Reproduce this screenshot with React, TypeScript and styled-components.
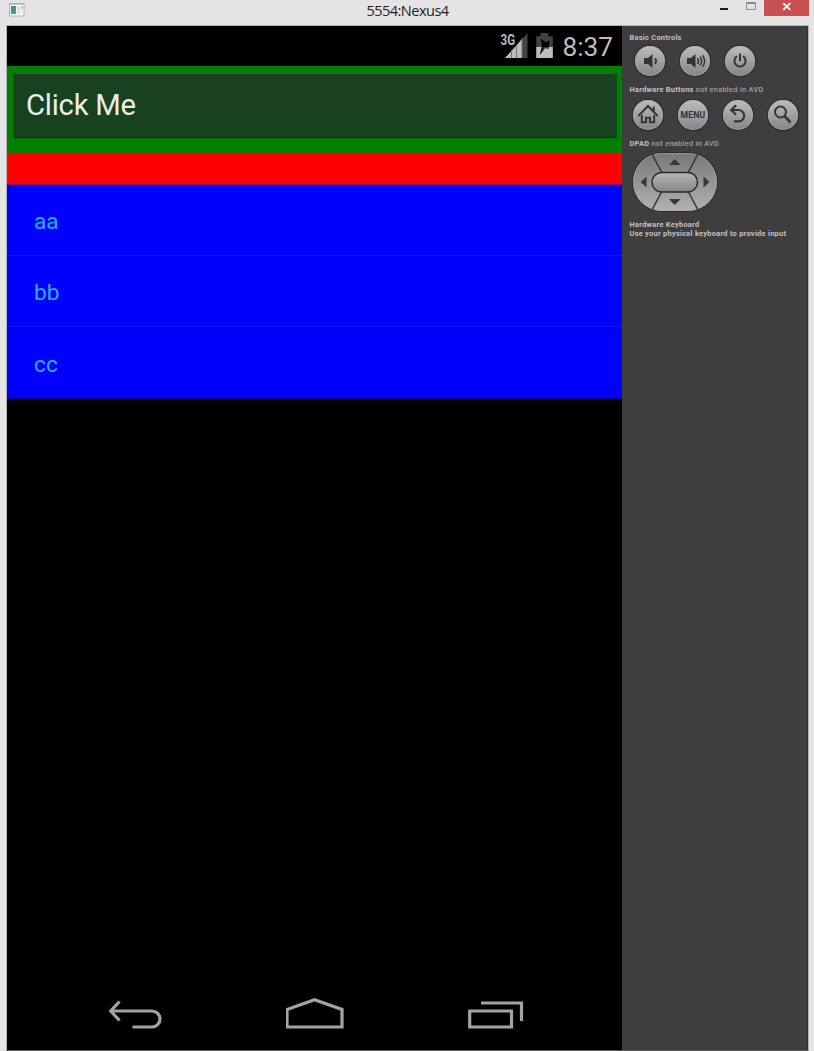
import React from 'react';
import styled, { createGlobalStyle } from 'styled-components';

const GlobalStyle = createGlobalStyle`
  * { box-sizing: border-box; }
  body { margin: 0; background: #e4e4e4; overflow: hidden; }
`;

const Window = styled.div`
  width: 814px;
  height: 1051px;
  display: flex;
  flex-direction: column;
  background: #e4e4e4;
  font-family: Roboto, sans-serif;
`;

const TitleBar = styled.header`
  height: 25px;
  flex: none;
  display: grid;
  grid-template-columns: 1fr auto 1fr;
  padding: 0 5px 0 9px;
`;

const AppIcon = styled.svg`
  margin-top: 3px;
  display: block;
`;

const Title = styled.h1`
  margin: 0 3px 0 0;
  font: 400 14.6px/20px 'Open Sans', sans-serif;
  letter-spacing: -0.55px;
  color: #1e1e1e;
`;

const Controls = styled.div`
  display: flex;
  justify-content: flex-end;
`;

const Control = styled.button<{ $width: number; $close?: boolean }>`
  width: ${(p) => p.$width}px;
  height: 16px;
  padding: 0;
  border: 0;
  background: ${(p) => (p.$close ? '#c75050' : 'transparent')};
  svg { display: block; }
`;

const Frame = styled.main`
  flex: 1;
  width: 803px;
  margin-left: 6px;
  display: flex;
  border: 1px solid #b4b4b4;
  border-bottom-color: #5e5b5c;
`;

const Screen = styled.section`
  width: 615px;
  display: flex;
  flex-direction: column;
  background: #000;
`;

const StatusBar = styled.div`
  height: 40px;
  display: flex;
  justify-content: flex-end;
  padding-right: 9px;
`;

const Clock = styled.span`
  margin-left: 9px;
  font-size: 26.2px;
  line-height: 42px;
  color: #bdbdbd;
`;

const ButtonArea = styled.div`
  height: 87px;
  padding: 6px 5px 15px 6px;
  background: #008000;
  border-bottom: 1px solid #406000;
`;

const ClickButton = styled.button`
  display: block;
  width: 604px;
  height: 66px;
  padding: 0 0 0 12px;
  text-align: left;
  background: #18421f;
  border: 1px solid #10501a;
  border-top-color: #176a1e;
  border-bottom-color: #0c3912;
  border-radius: 3px;
  box-shadow: inset 0 1px 0 #38613c, inset 0 2px 0 #1b3c20, 0 1px 1px #066b0a;
  font: 400 29.2px/64px Roboto, sans-serif;
  letter-spacing: -0.2px;
  color: #ededed;
`;

const RedStrip = styled.div`
  height: 32px;
  background: #ff0000;
  border-bottom: 1px solid #900070;
`;

const List = styled.ul`
  margin: 0;
  padding: 0;
  list-style: none;
  background: #0000ff;
`;

const Item = styled.li<{ $height: number }>`
  height: ${(p) => p.$height}px;
  padding-left: 27px;
  border-bottom: 1px solid #1414ff;
  font-size: 22.7px;
  line-height: 73px;
  color: #30aee6;
  &:last-child { border-bottom-color: #000080; line-height: 75px; }
`;

const NavBar = styled.nav`
  margin-top: auto;
  height: 60px;
  display: flex;
  padding-left: 99px;
  svg { display: block; flex: none; }
`;

const SidePanel = styled.aside`
  flex: 1;
  padding: 7px 0 0 7px;
  background: #3e3e3e;
  border-right: 1px solid #303030;
`;

const Label = styled.div<{ $gap?: number }>`
  height: 9px;
  margin-top: ${(p) => p.$gap ?? 0}px;
  padding-left: 0.5px;
  font-size: 7.4px;
  line-height: 9px;
  font-weight: 500;
  letter-spacing: 0.28px;
  white-space: nowrap;
  color: #a2a2a2;
  b { font-weight: 700; color: #c2c2c2; }
`;

const KeyRow = styled.div<{ $indent: number; $top: number }>`
  display: flex;
  gap: 15px;
  padding-left: ${(p) => p.$indent}px;
  margin-top: ${(p) => p.$top}px;
`;

const Key = styled.button`
  width: 30px;
  height: 30px;
  flex: none;
  padding: 0;
  display: flex;
  align-items: center;
  justify-content: center;
  border: 0;
  border-radius: 50%;
  background: linear-gradient(#bdbdbd, #858585);
  box-shadow: 0 0 1px 1px #2b2b2b, inset 0 0 1px 1px #b5b5b580;
  font: 700 8.6px/30px Roboto, sans-serif;
  letter-spacing: 0.25px;
  color: #333;
  svg { display: block; }
`;

const Dpad = styled.svg`
  display: block;
  margin: 3px 0 0 2px;
`;

const ITEMS = [
  { text: 'aa', height: 71 },
  { text: 'bb', height: 71 },
  { text: 'cc', height: 72 },
];

const KeyIcon = ({ children }: { children: React.ReactNode }) => (
  <svg width="30" height="30" viewBox="0 0 30 30" fill="none" stroke="#353535" strokeWidth="1.8">
    {children}
  </svg>
);

const SpeakerBody = ({ x }: { x: number }) => (
  <path d={`M${x} 12h4l4.5-4v14l-4.5-4h-4z`} fill="#353535" stroke="none" />
);

export default function App() {
  return (
    <>
      <GlobalStyle />
      <Window>
        <TitleBar>
          <AppIcon width="16" height="14" viewBox="0 0 16 14">
            <defs>
              <linearGradient id="thumb" x1="0" y1="0" x2="1" y2="1">
                <stop offset="0" stopColor="#4a7fa0" />
                <stop offset="1" stopColor="#54a878" />
              </linearGradient>
            </defs>
            <rect x="0.5" y="0.5" width="14.500" height="12.5" fill="#fafafa" stroke="#adb1b4" />
            <path d="M1 1.5h14" stroke="#c3c7ca" />
            <rect x="2" y="3" width="5" height="8" fill="url(#thumb)" />
            <rect x="8" y="3" width="3.5" height="8" fill="#dfe2e5" />
            <rect x="12" y="3" width="2" height="3" fill="#a8d6c2" />
            <rect x="12" y="7" width="2" height="4" fill="#e8f1ee" />
          </AppIcon>
          <Title>5554:Nexus4</Title>
          <Controls>
            <Control $width={27} aria-label="Minimize">
              <svg width="27" height="16"><rect x="10" y="8" width="8" height="2" fill="#1e1e1e" /></svg>
            </Control>
            <Control $width={27} aria-label="Maximize">
              <svg width="27" height="16" fill="none" stroke="#8b8b8b">
                <path d="M9.500 2.500h9v7h-9zM9 3.500h10" />
              </svg>
            </Control>
            <Control $width={45} $close aria-label="Close">
              <svg width="45" height="16" stroke="#fff" strokeWidth="1.8">
                <path d="M19.300 3.200l7 6.600M26.300 3.200l-7 6.600" />
              </svg>
            </Control>
          </Controls>
        </TitleBar>
        <Frame>
          <Screen>
            <StatusBar>
              <svg width="56" height="40" viewBox="498 26 56 40">
                <path d="M505 58L527.500 33v25z" fill="#424242" />
                <path d="M505 58L522 39v19z" fill="#bdbdbd" />
                <path d="M511.500 50v8M516.500 45v13M522 38v20" stroke="#777" />
                <path d="M498 28h17.500v17l-4 4H498z" fill="#000" />
                <text x="500.500" y="45" fontSize="14.500" fontWeight="700" fill="#bdbdbd" textLength="14.500" lengthAdjust="spacingAndGlyphs">3G</text>
                <path d="M540.500 33h8v3.300h4.300V58h-16.500V36.300h4.200z" fill="#424242" />
                <path d="M536.300 47h16.500v11h-16.500z" fill="#bdbdbd" />
                <path d="M540.800 38.800l5.400 3.400 3.600-1.700-1.500 8.500-3-1.200-5.600 7.200 2.300-9.200z" fill="#000" />
                <path d="M543.500 47h4.800l-.4 2-2.600-1.200-4.800 6.200z" fill="#333" />
              </svg>
              <Clock>8:37</Clock>
            </StatusBar>
            <ButtonArea>
              <ClickButton>Click Me</ClickButton>
            </ButtonArea>
            <RedStrip />
            <List>
              {ITEMS.map((item) => (
                <Item key={item.text} $height={item.height}>{item.text}</Item>
              ))}
            </List>
            <NavBar>
              <svg width="180" height="60" viewBox="106 990 180 60" fill="none" stroke="#a3a3a3" strokeWidth="3.200">
                <path d="M111 1011h41a8 8 0 0 1 0 16H132.500M119.500 1001.500l-8.800 9.500 8.800 9.500" />
              </svg>
              <svg width="180" height="60" viewBox="286 990 180 60" fill="none" stroke="#a3a3a3" strokeWidth="3.200">
                <path d="M287 1027v-17.500l27.500-9.800 27.500 9.800V1027z" />
              </svg>
              <svg width="60" height="60" viewBox="466 990 60 60" fill="none" stroke="#a3a3a3" strokeWidth="3.200">
                <path d="M469.700 1011h41.800v16h-41.800zM481 1003h40.500v18" />
              </svg>
            </NavBar>
          </Screen>
          <SidePanel>
            <Label><b>Basic Controls</b></Label>
            <KeyRow $indent={6} $top={4}>
              <Key aria-label="Volume down">
                <KeyIcon>
                  <SpeakerBody x={9} />
                  <path d="M20 12.200q2.200 2.800 0 5.700" />
                </KeyIcon>
              </Key>
              <Key aria-label="Volume up">
                <KeyIcon>
                  <SpeakerBody x={7} />
                  <path d="M17.500 12.200q2 2.800 0 5.700M20 10.700q3.200 4.300 0 8.700M22.500 9.200q4.400 5.800 0 11.700" strokeWidth="1.500" />
                </KeyIcon>
              </Key>
              <Key aria-label="Power">
                <KeyIcon>
                  <path d="M12 10.200a5.600 5.600 0 1 0 6 0M15 7.500v7.500" strokeWidth="2" />
                </KeyIcon>
              </Key>
            </KeyRow>
            <Label $gap={9}><b>Hardware Buttons</b> not enabled in AVD</Label>
            <KeyRow $indent={4} $top={6}>
              <Key aria-label="Home">
                <KeyIcon>
                  <path d="M5.300 16L15 6l9.700 10M8.800 15v7.200h4.200v-4.500h4v4.500h4.200V15M20.800 6.500v5" strokeWidth="2" />
                </KeyIcon>
              </Key>
              <Key>MENU</Key>
              <Key aria-label="Back">
                <KeyIcon>
                  <path d="M8.500 10H15.500a5.700 5.700 0 0 1 0 11.400h-4.500M13 5.300L8.300 10l4.700 4.700" strokeWidth="2.200" />
                </KeyIcon>
              </Key>
              <Key aria-label="Search">
                <KeyIcon>
                  <circle cx="12.500" cy="12" r="5.500" strokeWidth="2" />
                  <path d="M16.500 16l6 6.500" strokeWidth="2.600" />
                </KeyIcon>
              </Key>
            </KeyRow>
            <Label $gap={9}><b>DPAD</b> not enabled in AVD</Label>
            <Dpad width="88" height="62" viewBox="631 151 88 62">
              <defs>
                <linearGradient id="pad" x1="0" y1="0" x2="0" y2="1">
                  <stop offset="0" stopColor="#777" />
                  <stop offset="1" stopColor="#b2b2b2" />
                </linearGradient>
                <linearGradient id="padCenter" x1="0" y1="0" x2="0" y2="1">
                  <stop offset="0" stopColor="#b8b8b8" />
                  <stop offset="1" stopColor="#858585" />
                </linearGradient>
              </defs>
              <rect x="632.500" y="152.500" width="85" height="59" rx="29.500" fill="url(#pad)" stroke="#292929" />
              <rect x="633.500" y="153.500" width="83" height="57" rx="28.500" fill="none" stroke="#aaa" strokeOpacity="0.6" />
              <path d="M652 154l9.500 18M698 154l-9.500 18M652 210l9.500-18M698 210l-9.500-18" stroke="#333" strokeWidth="1.500" />
              <rect x="652" y="172.500" width="45.500" height="19.500" rx="9.700" fill="url(#padCenter)" stroke="#2a2a2a" strokeWidth="1.500" />
              <path d="M669 165l5.800-6 5.800 6zM669 199h11.600l-5.800 6zM646.500 176.500v11l-6-5.500zM703.500 176.500v11l6-5.500z" fill="#383838" />
            </Dpad>
            <Label $gap={7}><b>Hardware Keyboard</b></Label>
            <Label><b>Use your physical keyboard to provide input</b></Label>
          </SidePanel>
        </Frame>
      </Window>
    </>
  );
}
